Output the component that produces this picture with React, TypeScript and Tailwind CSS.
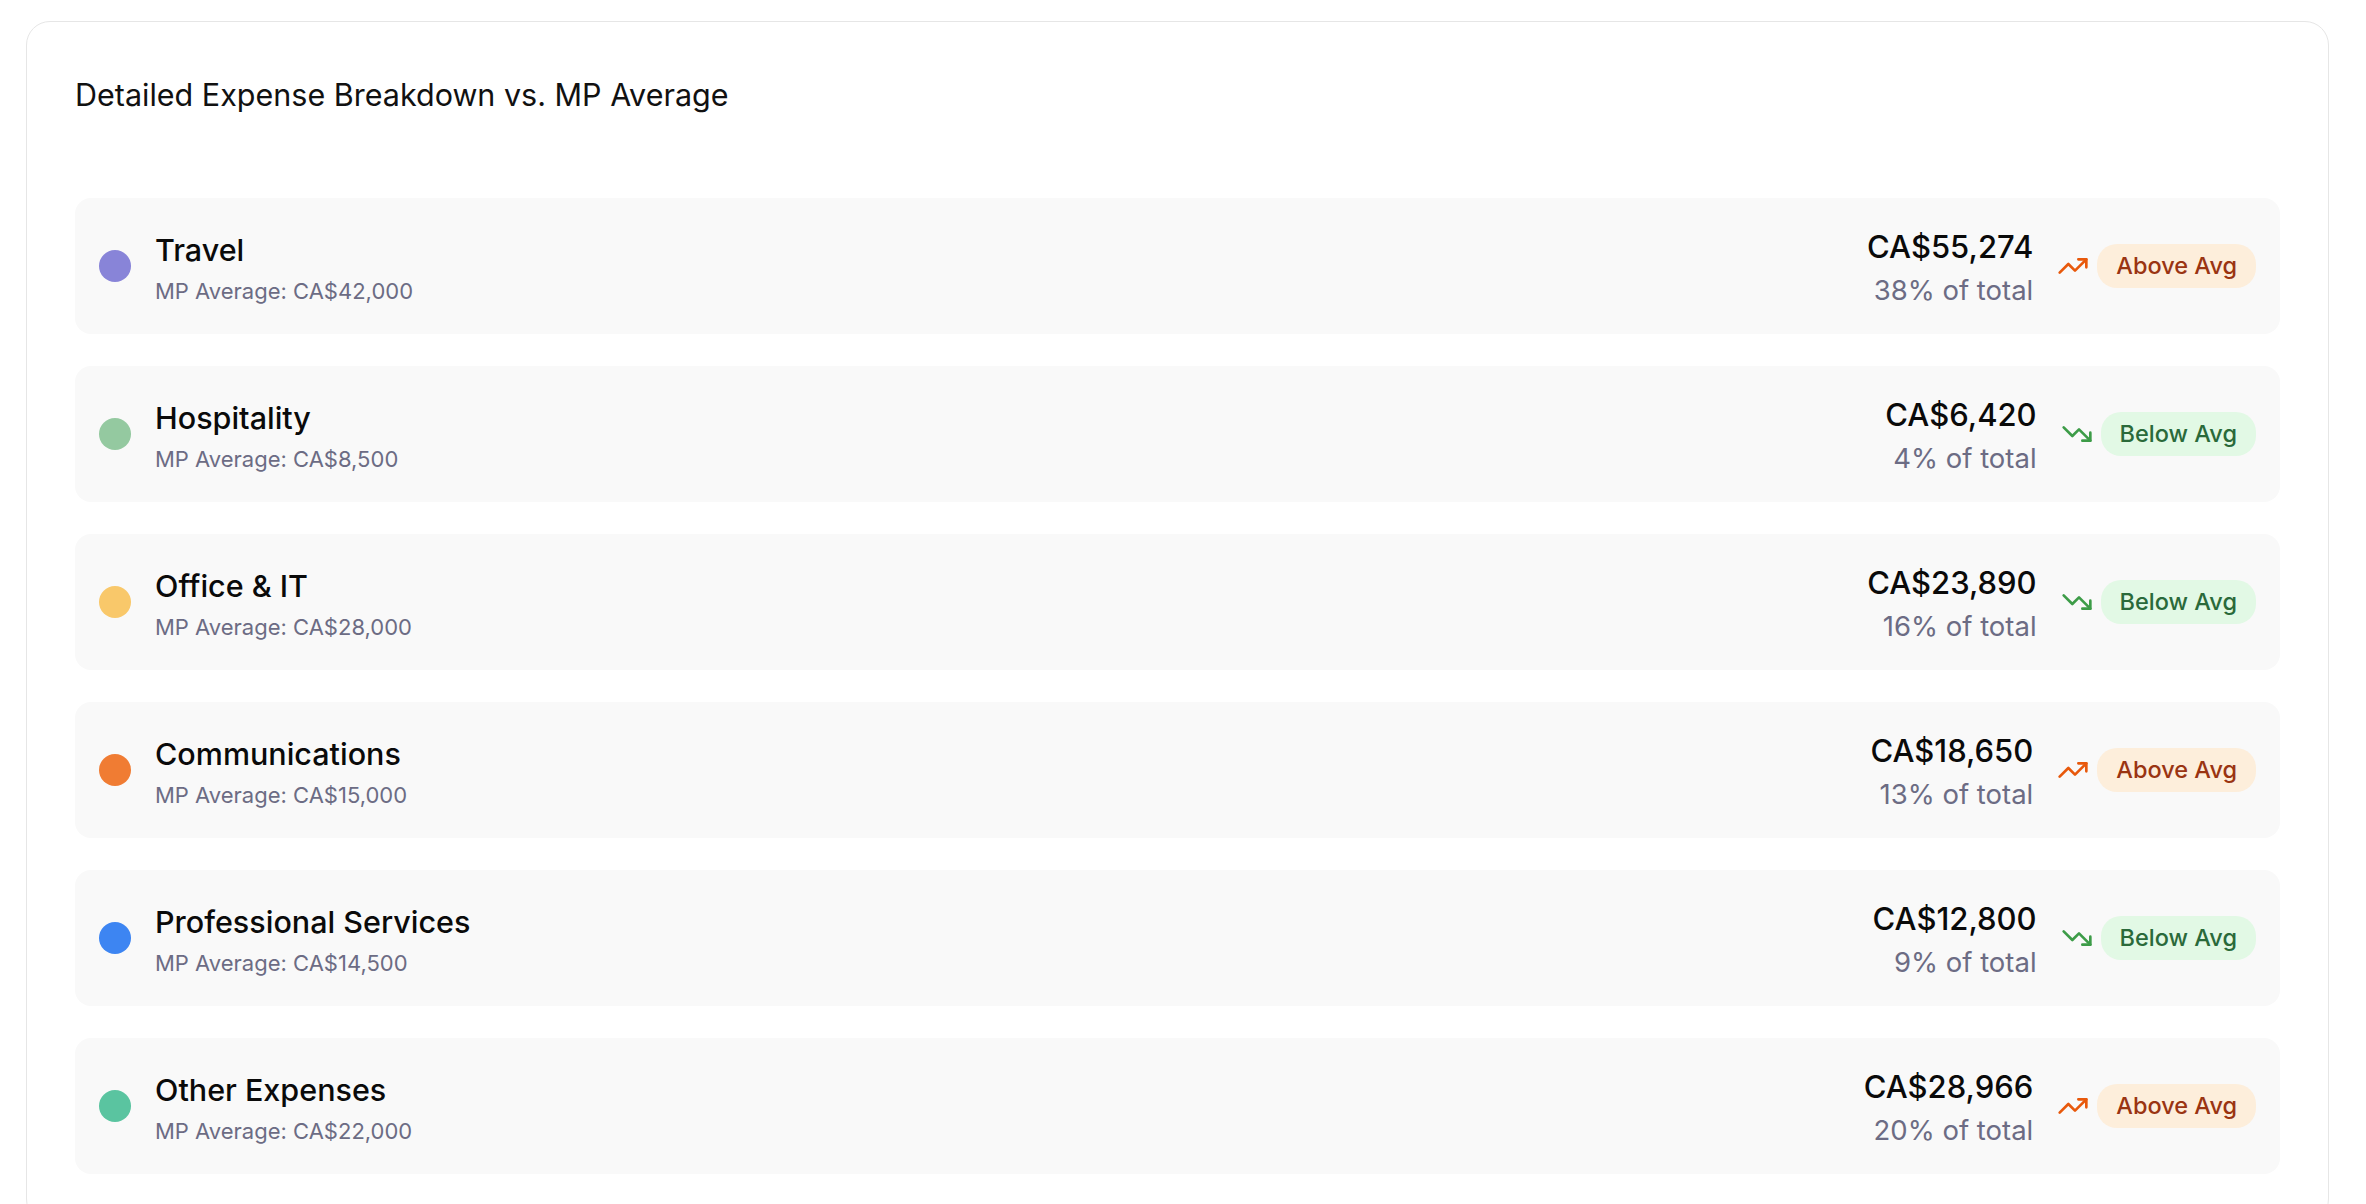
import React from "react";
import { TrendingUp, TrendingDown } from "lucide-react";

type Row = {
  name: string;
  avg: string;
  amount: string;
  pct: string;
  color: string;
  above: boolean;
};

const rows: Row[] = [
  { name: "Travel", avg: "CA$42,000", amount: "CA$55,274", pct: "38% of total", color: "#8884d8", above: true },
  { name: "Hospitality", avg: "CA$8,500", amount: "CA$6,420", pct: "4% of total", color: "#94c9a0", above: false },
  { name: "Office & IT", avg: "CA$28,000", amount: "CA$23,890", pct: "16% of total", color: "#f9c86a", above: false },
  { name: "Communications", avg: "CA$15,000", amount: "CA$18,650", pct: "13% of total", color: "#f07c33", above: true },
  { name: "Professional Services", avg: "CA$14,500", amount: "CA$12,800", pct: "9% of total", color: "#3d85f2", above: false },
  { name: "Other Expenses", avg: "CA$22,000", amount: "CA$28,966", pct: "20% of total", color: "#5ac4a0", above: true },
];

function ExpenseRow({ r }: { r: Row }) {
  return (
    <div className="flex h-[136px] items-center rounded-[16px] bg-[#f9f9f9] px-[24px]">
      <div className="h-[32px] w-[32px] shrink-0 rounded-full" style={{ backgroundColor: r.color }} />
      <div className="ml-[24px] flex flex-col">
        <div className="text-[30.5px] font-medium leading-[46px] text-[#0a0a0a]">{r.name}</div>
        <div className="mt-[3px] text-[22px] leading-[30px] text-[#6c6c84]">MP Average: {r.avg}</div>
      </div>
      <div className="ml-auto flex items-center">
        <div className="mt-[5px] flex flex-col items-end">
          <div className="text-[31px] font-medium leading-[43px] text-[#0a0a0a]">{r.amount}</div>
          <div className="text-[27.5px] leading-[44px] text-[#6c6c84]">{r.pct}</div>
        </div>
        <div className="ml-[24px] flex items-center gap-[8px]">
          {r.above ? (
            <TrendingUp size={32} color="#e8590c" strokeWidth={2} />
          ) : (
            <TrendingDown size={32} color="#3d9c48" strokeWidth={2} />
          )}
          {r.above ? (
            <div className="flex h-[44px] items-center rounded-[20px] bg-[#fdeedb] px-[19px] text-[23.5px] font-medium text-[#9a3412]">
              Above Avg
            </div>
          ) : (
            <div className="flex h-[44px] items-center rounded-[20px] bg-[#e2f9e5] px-[19px] text-[23.5px] font-medium text-[#2a6a3a]">
              Below Avg
            </div>
          )}
        </div>
      </div>
    </div>
  );
}

export default function App() {
  return (
    <div
      className="min-h-screen bg-white pl-[26px] pt-[21px]"
      style={{ fontFamily: "Inter, 'Noto Sans', 'Liberation Sans', sans-serif" }}
    >
      <div className="w-[2303px] rounded-[24px] border border-[#e6e6e6] bg-white p-[48px]">
        <h2 className="text-[30.5px] font-normal leading-[50px] text-[#111111]">
          Detailed Expense Breakdown vs. MP Average
        </h2>
        <div className="mt-[78px] flex flex-col gap-[32px]">
          {rows.map((r) => (
            <ExpenseRow key={r.name} r={r} />
          ))}
        </div>
      </div>
    </div>
  );
}
